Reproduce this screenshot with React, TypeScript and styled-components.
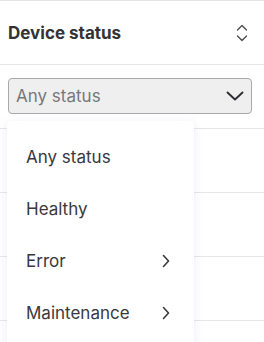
import React from "react";
import styled, { createGlobalStyle } from "styled-components";

const Global = createGlobalStyle`
  html, body { margin: 0; padding: 0; background: #ffffff; }
  body { font-family: Inter, "Noto Sans", sans-serif; overflow: hidden; }
  * { box-sizing: border-box; }
`;

const Panel = styled.div`
  position: relative;
  width: 264px;
  height: 342px;
  overflow: hidden;
  border-top: 1px solid #e4e4e8;
`;

const Row = styled.div<{ $h?: number }>`
  height: ${(p) => p.$h ?? 64}px;
  border-bottom: 1px solid #e6e6ea;
  display: flex;
  align-items: center;
  padding: 0 8px;
`;

const Header = styled(Row)`
  justify-content: space-between;
  padding-right: 16px;
`;

const Title = styled.h2`
  margin: 0;
  font-size: 17px;
  font-weight: 700;
  color: #333336;
`;

const IconBtn = styled.span`
  display: flex;
  align-items: center;
  color: #4a4a4e;
`;

const Select = styled.div`
  width: 244px;
  height: 36px;
  margin-top: 13px;
  align-self: flex-start;
  background: #efeff0;
  border: 1px solid #a9a9ad;
  border-radius: 4px;
  display: flex;
  align-items: center;
  justify-content: space-between;
  padding: 0 7px 0 7px;
  font-size: 17px;
  color: #77777b;
`;

const Menu = styled.ul`
  position: absolute;
  left: 7px;
  top: 120px;
  width: 187px;
  margin: 0;
  padding: 10px 0 0;
  list-style: none;
  background: #ffffff;
  border-radius: 5px;
  box-shadow: 0 2px 10px rgba(120, 110, 200, 0.14);
  height: 240px;
`;

const Item = styled.li`
  height: 52px;
  display: flex;
  align-items: center;
  justify-content: space-between;
  padding: 0 24px 0 19px;
  font-size: 17px;
  color: #38383c;
`;

const ChevronRight = () => (
  <svg width="8" height="14" viewBox="0 0 8 14" fill="none">
    <path d="M1.5 1.5 L6.5 7 L1.5 12.5" stroke="#3a3a3e" strokeWidth="1.6" strokeLinecap="round" strokeLinejoin="round" />
  </svg>
);

const ChevronDown = () => (
  <svg width="18" height="10" viewBox="0 0 18 10" fill="none">
    <path d="M1.5 1.5 L9 8.5 L16.5 1.5" stroke="#2e2e32" strokeWidth="1.9" strokeLinecap="round" strokeLinejoin="round" />
  </svg>
);

const UpDown = () => (
  <svg width="12" height="18" viewBox="0 0 12 18" fill="none">
    <path d="M1.5 6 L6 1.5 L10.5 6" stroke="#4a4a4e" strokeWidth="1.3" strokeLinecap="round" strokeLinejoin="round" />
    <path d="M1.5 12 L6 16.5 L10.5 12" stroke="#4a4a4e" strokeWidth="1.3" strokeLinecap="round" strokeLinejoin="round" />
  </svg>
);

const items: { label: string; sub?: boolean }[] = [
  { label: "Any status" },
  { label: "Healthy" },
  { label: "Error", sub: true },
  { label: "Maintenance", sub: true },
];

export default function App() {
  return (
    <>
      <Global />
      <Panel>
        <Header>
          <Title>Device status</Title>
          <IconBtn>
            <UpDown />
          </IconBtn>
        </Header>
        <Row>
          <Select>
            <span>Any status</span>
            <ChevronDown />
          </Select>
        </Row>
        <Row />
        <Row />
        <Row />
        <Row />
        <Menu>
          {items.map((it) => (
            <Item key={it.label}>
              <span>{it.label}</span>
              {it.sub && <ChevronRight />}
            </Item>
          ))}
        </Menu>
      </Panel>
    </>
  );
}
